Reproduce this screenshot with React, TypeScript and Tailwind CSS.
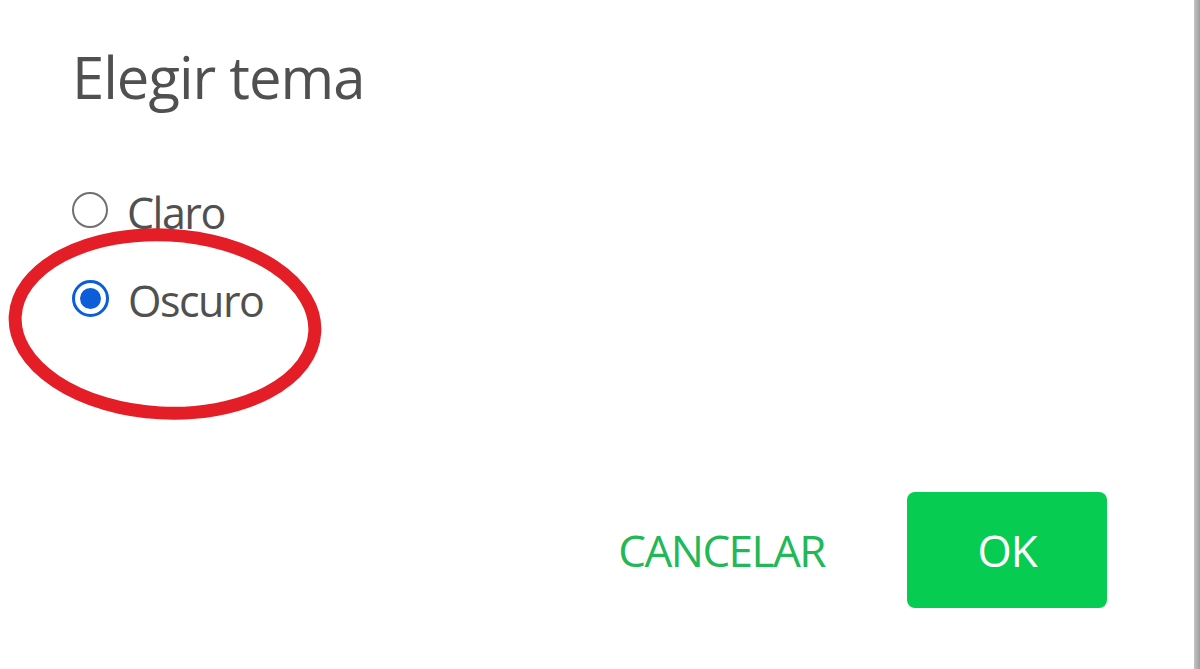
export default function App() {
  return (
    <div className="relative flex h-[669px] w-full overflow-hidden bg-white font-['Open_Sans',sans-serif]">
      <div className="flex flex-1 flex-col pl-[72px] pr-[87px]">
        <h1 className="mt-[48px] text-[58px] leading-none font-normal tracking-[-1px] text-[#505050]">
          Elegir tema
        </h1>

        <div className="mt-[62px] flex flex-col">
          <label className="flex h-[88px] items-center gap-[19px]">
            <span className="mb-[4px] h-[36px] w-[36px] rounded-full border-2 border-[#707070] bg-white" />
            <span className="text-[43px] leading-none tracking-[-1.5px] text-[#505050]">Claro</span>
          </label>
          <label className="flex h-[88px] items-center gap-[19px]">
            <span className="mb-[4px] flex h-[37px] w-[37px] items-center justify-center rounded-full border-[3px] border-[#0b5ed7] bg-white">
              <span className="h-[21px] w-[21px] rounded-full bg-[#0b5ed7]" />
            </span>
            <span className="text-[43px] leading-none tracking-[-1.5px] text-[#505050]">Oscuro</span>
          </label>
        </div>

        <div className="mt-auto mb-[61px] flex items-center justify-end gap-[82px]">
          <button className="text-[44px] leading-none tracking-[-1.5px] text-[#22b857]">CANCELAR</button>
          <button className="flex h-[116px] w-[200px] items-center justify-center rounded-[8px] bg-[#07cc52] text-[44px] leading-none tracking-[-1px] text-white">
            OK
          </button>
        </div>
      </div>
      <div className="w-[6px] bg-gradient-to-r from-[#c4c4c4] to-[#9e9e9e]" />

      <svg className="pointer-events-none absolute inset-0" width="1200" height="669" viewBox="0 0 1200 669">
        <ellipse
          cx="165"
          cy="324"
          rx="150"
          ry="89"
          fill="none"
          stroke="#e41e26"
          strokeWidth="13"
          transform="rotate(3 165 324)"
        />
      </svg>
    </div>
  );
}
